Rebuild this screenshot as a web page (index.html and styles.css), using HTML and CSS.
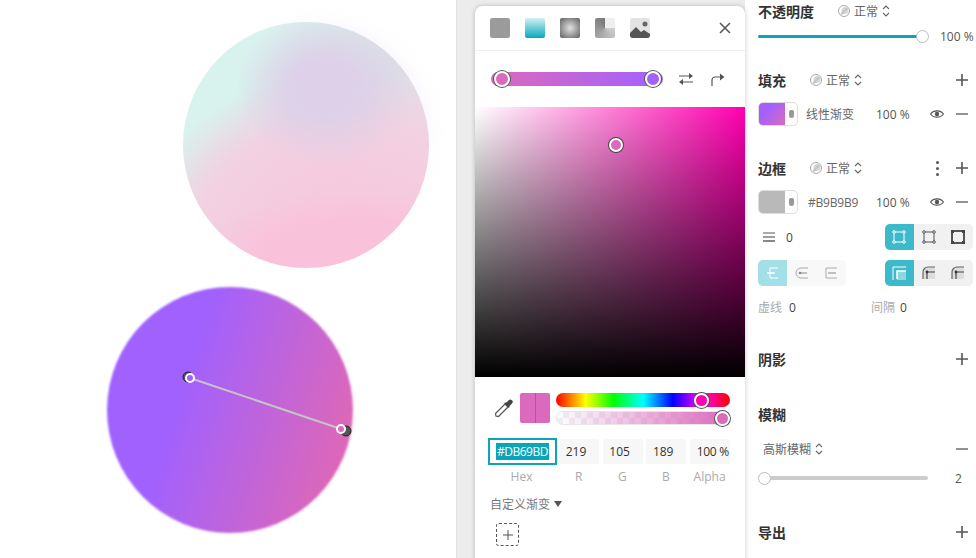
FILE: index.html
```html
<!DOCTYPE html>
<html lang="zh">
<head>
    <meta charset="UTF-8">
    <title>渐变编辑</title>
    <link rel="stylesheet" href="styles.css">
</head>
<body>
    <svg class="defs" width="0" height="0">
        <symbol id="i-plus" viewBox="0 0 14 14"><path d="M7 1v12M1 7h12" stroke="#555" stroke-width="1.6" fill="none"/></symbol>
        <symbol id="i-minus" viewBox="0 0 14 14"><path d="M1 7h12" stroke="#777" stroke-width="1.6" fill="none"/></symbol>
        <symbol id="i-eye" viewBox="0 0 14 14"><path d="M.5 7C3.500 2.800 10.500 2.800 13.500 7 10.500 11.200 3.500 11.200.5 7z" stroke="#555" stroke-width="1.100" fill="none"/><circle cx="7" cy="7" r="2.200" fill="#555"/></symbol>
        <symbol id="i-blend" viewBox="0 0 14 14"><circle cx="7" cy="7" r="5.500" stroke="#aaa" fill="none"/><path d="M3.500 9.500l6-6 1.500 1.500-6 6z" fill="#bbb"/><circle cx="8" cy="6.500" r="3.500" fill="#c8c8c8" opacity=".7"/></symbol>
        <symbol id="i-updown" viewBox="0 0 8 14"><path d="M1 5l3-3 3 3M1 9l3 3 3-3" stroke="#666" stroke-width="1.100" fill="none"/></symbol>
        <symbol id="i-cap" viewBox="0 0 14 14"><path d="M13 2H6a5 5 0 0 0 0 10h7" stroke="#aaa" fill="none"/><path d="M5 7h7" stroke="#888" stroke-width="1.200"/><circle cx="5" cy="7" r="1.300" fill="#888"/></symbol>
        <symbol id="i-corner-r" viewBox="0 0 14 14"><path d="M1 13V6a5 5 0 0 1 5-5h7v12z" fill="#ddd"/><path d="M1 13V6a5 5 0 0 1 5-5h7" stroke="#666" stroke-width="1.200" fill="none"/><path d="M5 13V6h8" stroke="#444" stroke-width="1.200" fill="none"/><circle cx="5" cy="6" r="1.400" fill="#333"/></symbol>
    </svg>

    <div class="canvas">
        <div class="circle circle-pastel"></div>
        <div class="circle circle-purple"></div>
        <svg class="gradient-line" width="456" height="558">
            <circle cx="188" cy="377" r="5" fill="#555" stroke="#222"/>
            <circle cx="346" cy="431" r="5" fill="#555" stroke="#222"/>
            <line x1="190" y1="378" x2="341" y2="429" stroke="#c4c4c4" stroke-width="2"/>
            <circle cx="190" cy="378" r="4" fill="#a261ff" stroke="#fff" stroke-width="2"/>
            <circle cx="341" cy="429" r="4" fill="#d769bf" stroke="#fff" stroke-width="2"/>
        </svg>
    </div>

    <div class="gutter">
        <div class="popup">
            <div class="type-bar">
                <span class="type type-solid"></span>
                <span class="type type-linear"></span>
                <span class="type type-radial"></span>
                <span class="type type-angular"></span>
                <svg class="type" viewBox="0 0 20 20">
                    <rect width="20" height="20" rx="2" fill="#e3e3e3"/>
                    <circle cx="15" cy="6" r="2.500" fill="#666"/>
                    <path d="M0 18v-3l6-6 5 5 3-2 6 4v2a2 2 0 0 1-2 2H2a2 2 0 0 1-2-2z" fill="#555"/>
                </svg>
                <svg class="close" width="12" height="12" viewBox="0 0 12 12"><path d="M1 1l10 10M11 1L1 11" stroke="#555" stroke-width="1.500"/></svg>
            </div>
            <div class="stops-row">
                <div class="stops">
                    <span class="stop stop-pink"></span>
                    <span class="stop stop-purple"></span>
                </div>
                <svg width="16" height="14" viewBox="0 0 16 14"><path d="M1 4h11M15 10H4" stroke="#555" stroke-width="1.200" fill="none"/><path d="M11 1l4 3-4 3zM5 7l-4 3 4 3z" fill="#555"/></svg>
                <svg width="14" height="14" viewBox="0 0 14 14"><path d="M1 14V8a3 3 0 0 1 3-3h6" stroke="#555" stroke-width="1.200" fill="none"/><path d="M9 1.500L13.500 5 9 8.500z" fill="#555"/></svg>
            </div>
            <div class="picker"><span class="picker-dot"></span></div>
            <div class="color-row">
                <svg width="20" height="20" viewBox="0 0 20 20"><path d="M2 18l-.5-2.500L11 6l3 3-9.500 9.500z" fill="#fff" stroke="#555" stroke-width="1.200"/><path d="M10 5l5 5 1-2.500 2-2a2.200 2.200 0 0 0-3.300-3.300l-2 2z" fill="#444"/></svg>
                <div class="swatch-pair"><span></span><span></span></div>
                <div class="sliders">
                    <div class="hue"><span class="hue-dot"></span></div>
                    <div class="alpha"><span class="alpha-dot"></span></div>
                </div>
            </div>
            <div class="fields">
                <div class="field-hex"><span class="selected">#DB69BD</span></div>
                <div class="field">219</div>
                <div class="field">105</div>
                <div class="field">189</div>
                <div class="field">100 %</div>
            </div>
            <div class="field-labels">
                <span class="label-hex">Hex</span>
                <span>R</span>
                <span>G</span>
                <span>B</span>
                <span>Alpha</span>
            </div>
            <div class="custom">自定义渐变<i class="caret"></i></div>
            <div class="add-stop"><svg width="12" height="12" viewBox="0 0 12 12"><path d="M6 1v10M1 6h10" stroke="#555"/></svg></div>
        </div>
    </div>

    <div class="props">
        <div class="row row-opacity">
            <span class="title">不透明度</span>
            <span class="blend blend-wide"><svg class="ic"><use href="#i-blend"/></svg>正常<svg class="updown"><use href="#i-updown"/></svg></span>
        </div>
        <div class="row row-slider-op">
            <div class="slider teal"><span class="knob knob-end"></span></div>
            <span class="pct">100 %</span>
        </div>

        <div class="row row-fill">
            <span class="title">填充</span>
            <span class="blend"><svg class="ic"><use href="#i-blend"/></svg>正常<svg class="updown"><use href="#i-updown"/></svg></span>
            <svg class="ic action"><use href="#i-plus"/></svg>
        </div>
        <div class="row row-paint">
            <div class="paint"><span class="paint-color paint-gradient"></span><span class="paint-tab"><i></i></span></div>
            <span class="paint-name">线性渐变</span>
            <span class="paint-pct">100 %</span>
            <svg class="ic eye"><use href="#i-eye"/></svg>
            <svg class="ic minus"><use href="#i-minus"/></svg>
        </div>

        <div class="row row-border">
            <span class="title">边框</span>
            <span class="blend"><svg class="ic"><use href="#i-blend"/></svg>正常<svg class="updown"><use href="#i-updown"/></svg></span>
            <span class="dots"><i></i><i></i><i></i></span>
            <svg class="ic plus-after"><use href="#i-plus"/></svg>
        </div>
        <div class="row row-paint">
            <div class="paint"><span class="paint-color paint-grey"></span><span class="paint-tab"><i></i></span></div>
            <span class="paint-name paint-hex">#B9B9B9</span>
            <span class="paint-pct">100 %</span>
            <svg class="ic eye"><use href="#i-eye"/></svg>
            <svg class="ic minus"><use href="#i-minus"/></svg>
        </div>
        <div class="row row-width">
            <svg class="lines" width="12" height="10" viewBox="0 0 12 10"><path d="M0 1h12" stroke="#888" stroke-width="1.400"/><path d="M0 5h12" stroke="#888" stroke-width="1.600"/><path d="M0 9h12" stroke="#888" stroke-width="2"/></svg>
            <span class="num">0</span>
            <div class="seg seg-push">
                <span class="seg-item on"><svg width="14" height="14" viewBox="0 0 14 14"><path d="M2 2h10v10H2z" stroke="#fff" fill="none"/><g fill="#3cbaca" stroke="#fff"><circle cx="2" cy="2" r="1.300"/><circle cx="12" cy="2" r="1.300"/><circle cx="2" cy="12" r="1.300"/><circle cx="12" cy="12" r="1.300"/></g></svg></span>
                <span class="seg-item"><svg width="14" height="14" viewBox="0 0 14 14"><path d="M2 2h10v10H2z" stroke="#555" fill="none"/><g fill="#f1f1f1" stroke="#555"><circle cx="2" cy="2" r="1.300"/><circle cx="12" cy="2" r="1.300"/><circle cx="2" cy="12" r="1.300"/><circle cx="12" cy="12" r="1.300"/></g></svg></span>
                <span class="seg-item"><svg width="14" height="14" viewBox="0 0 14 14"><path d="M1 1h12v12H1z" stroke="#555" stroke-width="2" fill="none"/><path d="M0 0h3v3H0zM11 0h3v3h-3zM0 11h3v3H0zM11 11h3v3h-3z" fill="#444"/></svg></span>
            </div>
        </div>
        <div class="row row-caps">
            <div class="seg seg-light">
                <span class="seg-item on-light"><svg width="14" height="14" viewBox="0 0 14 14"><path d="M12 2H4v10h8" stroke="#fff" fill="none"/><path d="M1 7h8" stroke="#fff" stroke-width="1.500"/></svg></span>
                <span class="seg-item"><svg width="14" height="14"><use href="#i-cap"/></svg></span>
                <span class="seg-item"><svg width="14" height="14" viewBox="0 0 14 14"><path d="M13 2H2v10h11" stroke="#aaa" fill="none"/><path d="M4 7h8" stroke="#888" stroke-width="1.200"/></svg></span>
            </div>
            <div class="seg seg-push">
                <span class="seg-item on"><svg width="14" height="14" viewBox="0 0 14 14"><path d="M5 5h9v9H5z" fill="#8fd6df"/><path d="M1 14V1h13" stroke="#fff" fill="none"/><path d="M5 13V5h9" stroke="#fff" stroke-width="1.500" fill="none"/></svg></span>
                <span class="seg-item"><svg width="14" height="14"><use href="#i-corner-r"/></svg></span>
                <span class="seg-item"><svg width="14" height="14"><use href="#i-corner-r"/></svg></span>
            </div>
        </div>
        <div class="row row-dash">
            <span class="muted">虚线</span><span class="num num-dash">0</span>
            <span class="muted gap-label">间隔</span><span class="num num-dash">0</span>
        </div>

        <div class="row row-shadow">
            <span class="title">阴影</span>
            <svg class="ic action"><use href="#i-plus"/></svg>
        </div>

        <div class="row row-blur">
            <span class="title">模糊</span>
        </div>
        <div class="row row-blur-type">
            <span class="blur-name">高斯模糊<svg class="updown"><use href="#i-updown"/></svg></span>
            <svg class="ic action"><use href="#i-minus"/></svg>
        </div>
        <div class="row row-blur-slider">
            <div class="slider grey"><span class="knob knob-start"></span></div>
            <span class="blur-val">2</span>
        </div>

        <div class="row row-export">
            <span class="title">导出</span>
            <svg class="ic action"><use href="#i-plus"/></svg>
        </div>
        <span class="edge"></span>
    </div>
</body>
</html>
```

FILE: styles.css
```css
* {
    margin: 0;
    padding: 0;
    box-sizing: border-box;
}

body {
    display: flex;
    width: 976px;
    height: 558px;
    overflow: hidden;
    background: #fff;
    color: #444;
    font-family: "Open Sans", "Noto Sans CJK SC", sans-serif;
    font-size: 12px;
}

.defs {
    position: absolute;
}

/* canvas */
.canvas {
    position: relative;
    flex: 0 0 456px;
    background: #fff;
}

.circle {
    position: absolute;
    width: 246px;
    height: 246px;
    border-radius: 50%;
}

.circle-pastel {
    left: 183px;
    top: 22px;
    background:
        radial-gradient(ellipse 90px 78px at 142px 66px, #ddd0e8 35%, rgba(221, 208, 232, 0) 100%),
        radial-gradient(ellipse 165px 70px at 175px 240px, #f9c1da 55%, rgba(249, 193, 218, 0) 100%),
        radial-gradient(ellipse 215px 165px at 165px 215px, #f6c9dd 25%, #f2d1e1 70%, rgba(240, 214, 228, 0) 100%),
        linear-gradient(125deg, #d8f3ee 24%, #dae0e6 55%, #eadbe8 80%);
    box-shadow: 14px -12px 16px -12px rgba(235, 225, 250, .25);
}

.circle-purple {
    left: 107px;
    top: 287px;
    background: linear-gradient(108deg, #a061ff 32%, #e068b4 92%);
    filter: blur(.8px);
}

.gradient-line {
    position: absolute;
    left: 0;
    top: 0;
}

/* colour popup */
.gutter {
    flex: 0 0 289px;
    padding: 6px 0 0 19px;
    background: #ececec;
    border-left: 1px solid #e2e2e2;
}

.popup {
    position: relative;
    z-index: 2;
    width: 270px;
    height: 560px;
    margin-left: -1px;
    background: #fff;
    border-radius: 8px 8px 0 0;
    box-shadow: 0 0 5px rgba(0, 0, 0, .22);
}

.type-bar {
    display: flex;
    align-items: center;
    gap: 15px;
    height: 45px;
    padding: 0 14px 0 15px;
    border-bottom: 1px solid #eee;
}

.type {
    flex: none;
    width: 20px;
    height: 20px;
    border-radius: 2px;
}

.type-solid {
    background: #9b9b9b;
}

.type-linear {
    background: linear-gradient(#d4f0f3, #05a9bb);
}

.type-radial {
    background: radial-gradient(circle, #e2e2e2, #5f5f5f);
}

.type-angular {
    background: conic-gradient(#eee 0 25%, #cfcfcf 25%, #777 100%);
}

.close {
    margin-left: auto;
}

.stops-row {
    display: flex;
    align-items: center;
    height: 56px;
    padding-left: 16px;
}

.stops-row svg:first-of-type {
    margin-left: 15px;
}

.stops-row svg:last-of-type {
    margin-left: 17px;
}

.stops {
    position: relative;
    width: 172px;
    height: 14px;
    border-radius: 7px;
    background: linear-gradient(to right, #db69bd, #a261ff);
}

.stop {
    position: absolute;
    top: -1px;
    width: 16px;
    height: 16px;
    border-radius: 50%;
    border: 2px solid #fff;
    box-shadow: 0 0 0 1px #555;
}

.stop-pink {
    left: 3px;
    background: #db69bd;
}

.stop-purple {
    right: 2px;
    background: #a261ff;
}

.picker {
    position: relative;
    height: 270px;
    background:
        linear-gradient(to top, #000, rgba(0, 0, 0, 0)),
        linear-gradient(to right, #fff, #ff00b0);
}

.picker-dot {
    position: absolute;
    left: 134px;
    top: 31px;
    width: 14px;
    height: 14px;
    border-radius: 50%;
    background: #db69bd;
    border: 2px solid #fff;
    box-shadow: 0 0 0 1px #444;
}

.color-row {
    display: flex;
    align-items: flex-start;
    height: 61px;
    padding: 16px 0 0 19px;
}

.color-row > svg {
    margin-top: 5px;
}

.swatch-pair {
    display: flex;
    margin-left: 6px;
    width: 30px;
    height: 30px;
    border-radius: 2px;
    overflow: hidden;
}

.swatch-pair span {
    flex: 1;
    background: #db69bd;
}

.swatch-pair span + span {
    border-left: 1px solid #b9529e;
}

.sliders {
    display: flex;
    flex-direction: column;
    gap: 4px;
    margin-left: 6px;
    width: 174px;
}

.hue {
    position: relative;
    height: 14px;
    border-radius: 7px;
    background: linear-gradient(to right, #f00, #ff0 17%, #0f0 33%, #0ff 50%, #00f 67%, #f0f 83%, #f00);
}

.hue-dot,
.alpha-dot {
    position: absolute;
    width: 15px;
    height: 15px;
    border-radius: 50%;
    border: 2px solid #fff;
    box-shadow: 0 0 0 1px #555;
}

.hue-dot {
    left: 138px;
    top: 0;
    background: #ff00b0;
}

.alpha {
    position: relative;
    height: 14px;
    border-radius: 7px;
    border: 1px solid #e6e6e6;
    background:
        linear-gradient(to right, rgba(219, 105, 189, 0), #db69bd),
        repeating-conic-gradient(#f0f0f0 0 25%, #fff 0 50%) 0 0 / 12px 12px;
}

.alpha-dot {
    right: -1px;
    top: -1px;
    background: #db69bd;
}

.fields {
    display: flex;
    align-items: center;
    height: 27px;
    padding-left: 13px;
    font-size: 12px;
    color: #333;
}

.field-hex {
    flex: none;
    display: flex;
    align-items: center;
    justify-content: center;
    width: 69px;
    height: 27px;
    margin-right: 2px;
    border: 2px solid #0aa5b8;
}

.selected {
    padding: 0 1px;
    line-height: 17px;
    color: #fff;
    background: #0aa5b8;
    letter-spacing: -.5px;
}

.field {
    flex: none;
    width: 40px;
    height: 25px;
    margin-right: 3.6px;
    padding-right: 6px;
    border-radius: 2px;
    background: #f7f7f7;
    text-align: center;
    line-height: 25px;
}

.field:last-child {
    white-space: nowrap;
    text-align: right;
    padding-right: 1px;
    margin-right: 0;
    letter-spacing: -.3px;
}

.field-labels {
    display: flex;
    padding: 4px 0 0 11px;
    line-height: 16px;
    color: #aaa;
    font-size: 12px;
}

.field-labels span {
    flex: none;
    width: 43.600px;
    text-align: center;
}

.field-labels .label-hex {
    width: 71px;
}

.custom {
    display: flex;
    align-items: center;
    gap: 4px;
    padding: 5px 0 0 15px;
    height: 32px;
    color: #777;
}

.caret {
    width: 0;
    height: 0;
    border: 4.5px solid transparent;
    border-top: 6px solid #555;
    border-bottom: 0;
}

.add-stop {
    display: flex;
    align-items: center;
    justify-content: center;
    width: 23px;
    height: 23px;
    margin: 6px 0 0 21px;
    border: 1px dashed #555;
    border-radius: 3px;
}

/* properties panel */
.props {
    position: relative;
    flex: 1;
    padding: 0 3px 0 13px;
}

.row {
    position: relative;
    display: flex;
    align-items: center;
}

.title {
    flex: none;
    width: 51px;
    font-size: 14px;
    font-weight: 700;
    color: #333;
    white-space: nowrap;
}

.blend {
    display: flex;
    align-items: center;
    color: #666;
}

.blend-wide {
    margin-left: 28px;
}

.ic {
    flex: none;
    width: 14px;
    height: 14px;
}

.blend .ic {
    margin-right: 3px;
}

.updown {
    width: 8px;
    height: 14px;
    margin-left: 4px;
}

.action {
    margin: 0 5px 0 auto;
}

.row-opacity {
    height: 22px;
}

.row-slider-op {
    height: 16px;
    margin-top: 6px;
}

.slider {
    position: relative;
    height: 3px;
    border-radius: 2px;
}

.teal {
    width: 164px;
    background: #0aa5b8;
}

.grey {
    width: 170px;
    height: 4px;
    background: #ccc;
}

.knob {
    position: absolute;
    top: 50%;
    width: 13px;
    height: 13px;
    margin-top: -6.5px;
    border-radius: 50%;
    background: #fff;
    border: 1px solid #bbb;
}

.knob-end {
    right: -7px;
}

.knob-start {
    left: 0;
}

.pct {
    margin-left: 18px;
    white-space: nowrap;
    color: #555;
}

.row-fill {
    height: 22px;
    margin-top: 25px;
}

.row-paint {
    height: 24px;
    margin-top: 11px;
}

.paint {
    display: flex;
    flex: none;
    width: 40px;
    height: 24px;
    border: 1px solid #ddd;
    border-radius: 5px;
    overflow: hidden;
}

.paint-color {
    flex: none;
    width: 26px;
}

.paint-gradient {
    background: linear-gradient(130deg, #a261ff 30%, #db69bd);
}

.paint-grey {
    background: #b9b9b9;
}

.paint-tab {
    display: flex;
    flex: 1;
    align-items: center;
    justify-content: center;
}

.paint-tab i {
    width: 5px;
    height: 8px;
    border-radius: 2px 2px 3px 3px;
    background: #999;
}

.paint-name {
    flex: none;
    width: 70px;
    margin-left: 8px;
    color: #666;
}

.paint-hex {
    margin-left: 10px;
    width: 68px;
    letter-spacing: -.2px;
}

.paint-pct {
    flex: none;
    white-space: nowrap;
    color: #555;
}

.eye {
    margin-left: 20px;
}

.minus {
    margin-left: 11px;
}

.row-border {
    height: 22px;
    margin-top: 31px;
}

.dots {
    display: flex;
    flex-direction: column;
    gap: 3px;
    margin-left: auto;
}

.dots i {
    width: 3px;
    height: 3px;
    border-radius: 50%;
    background: #555;
}

.plus-after {
    margin: 0 5px 0 16px;
}

.row-width {
    height: 26px;
    margin-top: 10px;
}

.lines {
    margin-left: 5px;
}

.num {
    color: #444;
    margin-left: 11px;
}

.seg {
    display: flex;
    height: 26px;
    border-radius: 5px;
    overflow: hidden;
    background: #f1f1f1;
}

.seg-push {
    margin: 0 1px 0 auto;
}

.seg-light {
    background: #f8f8f8;
}

.seg-item {
    display: flex;
    align-items: center;
    justify-content: center;
    width: 29.330px;
}

.on {
    background: #3cbaca;
}

.on-light {
    background: #a3dfe6;
}

.row-caps {
    height: 26px;
    margin-top: 10px;
}

.row-dash {
    height: 18px;
    margin-top: 12px;
}

.muted {
    color: #aaa;
}

.num-dash {
    margin-left: 7px;
}

.gap-label {
    margin-left: 75px;
}

.gap-label + .num-dash {
    margin-left: 5px;
}

.row-shadow {
    height: 22px;
    margin-top: 32px;
}

.row-blur {
    height: 22px;
    margin-top: 33px;
}

.row-blur-type {
    height: 22px;
    margin-top: 13px;
}

.blur-name {
    display: flex;
    align-items: center;
    margin-left: 5px;
    color: #666;
}

.row-blur-slider {
    height: 16px;
    margin-top: 10px;
}

.blur-val {
    margin-left: 27px;
    color: #555;
}

.row-export {
    height: 22px;
    margin-top: 35px;
}

.edge {
    position: absolute;
    right: 0;
    top: 510px;
    width: 1px;
    height: 48px;
    background: #333;
}
```
